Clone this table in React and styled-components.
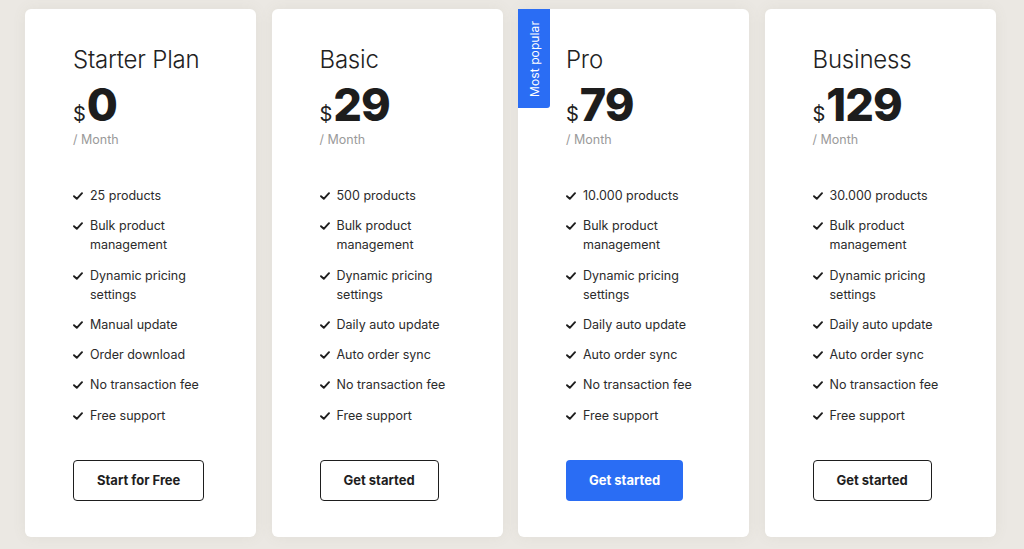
import styled, { createGlobalStyle } from "styled-components";

const plans = [
    {
        name: "Starter Plan",
        price: "0",
        cta: "Start for Free",
        features: [
            "25 products",
            "Bulk product management",
            "Dynamic pricing settings",
            "Manual update",
            "Order download",
            "No transaction fee",
            "Free support",
        ],
    },
    {
        name: "Basic",
        price: "29",
        cta: "Get started",
        features: [
            "500 products",
            "Bulk product management",
            "Dynamic pricing settings",
            "Daily auto update",
            "Auto order sync",
            "No transaction fee",
            "Free support",
        ],
    },
    {
        name: "Pro",
        price: "79",
        cta: "Get started",
        popular: true,
        features: [
            "10.000 products",
            "Bulk product management",
            "Dynamic pricing settings",
            "Daily auto update",
            "Auto order sync",
            "No transaction fee",
            "Free support",
        ],
    },
    {
        name: "Business",
        price: "129",
        cta: "Get started",
        features: [
            "30.000 products",
            "Bulk product management",
            "Dynamic pricing settings",
            "Daily auto update",
            "Auto order sync",
            "No transaction fee",
            "Free support",
        ],
    },
];

const GlobalStyle = createGlobalStyle`
    body {
        margin: 0;
        background: #ebe8e3;
        font-family: "Inter", "Liberation Sans", sans-serif;
        color: #222;
    }
`;

function Check() {
    return (
        <svg width="10" height="8" viewBox="0 0 10 8" fill="none">
            <path
                d="M1 4.2 L3.8 6.8 L9 1.2"
                stroke="#1e1e1e"
                strokeWidth="1.9"
                strokeLinecap="round"
                strokeLinejoin="round"
            />
        </svg>
    );
}

function PlanCard({ plan }) {
    return (
        <Card>
            {plan.popular && <Badge>Most popular</Badge>}
            <Title>{plan.name}</Title>
            <PriceRow>
                <Currency>$</Currency>
                <Amount>{plan.price}</Amount>
            </PriceRow>
            <Period>/ Month</Period>
            <Features>
                {plan.features.map((f) => (
                    <Feature key={f}>
                        <CheckWrap>
                            <Check />
                        </CheckWrap>
                        <span>{f}</span>
                    </Feature>
                ))}
            </Features>
            <Button primary={plan.popular}>{plan.cta}</Button>
        </Card>
    );
}

export default function App() {
    return (
        <>
            <GlobalStyle />
            <Page>
                {plans.map((p) => (
                    <PlanCard key={p.name} plan={p} />
                ))}
            </Page>
        </>
    );
}

const Page = styled.div`
    display: grid;
    grid-template-columns: repeat(4, 231px);
    column-gap: 15.5px;
    padding: 9px 25px 12px;
    height: 549px;
    box-sizing: border-box;
`;

const Card = styled.div`
    position: relative;
    background: #fff;
    border-radius: 6px;
    box-shadow: 0 0 14px rgba(120, 110, 90, 0.08);
    padding: 36px 20px 0 48px;
    display: flex;
    flex-direction: column;
    align-items: flex-start;
`;

const Badge = styled.div`
    position: absolute;
    left: 0;
    top: 0;
    width: 32px;
    height: 99px;
    background: #2a6df4;
    color: #fff;
    font-size: 12px;
    writing-mode: vertical-rl;
    transform: rotate(180deg);
    border-radius: 3px 0 0 0;
    display: flex;
    align-items: center;
    justify-content: center;
    letter-spacing: 0.1px;
`;

const Title = styled.h2`
    margin: 0;
    font-size: 24px;
    font-weight: 300;
    line-height: 30px;
    color: #222;
    letter-spacing: -0.2px;
`;

const PriceRow = styled.div`
    display: flex;
    align-items: baseline;
    margin-top: 6px;
    height: 48px;
`;

const Currency = styled.span`
    font-size: 20px;
    font-weight: 400;
    margin-right: 1px;
`;

const Amount = styled.span`
    font-size: 45px;
    font-weight: 800;
    line-height: 48px;
    letter-spacing: -1px;
    color: #1d1d1d;
`;

const Period = styled.div`
    margin-top: 3px;
    font-size: 12.5px;
    color: #9a9a9a;
`;

const Features = styled.ul`
    list-style: none;
    margin: 39px 0 0;
    padding: 0;
    display: flex;
    flex-direction: column;
    gap: 11.3px;
`;

const Feature = styled.li`
    display: flex;
    align-items: flex-start;
    font-size: 12.5px;
    line-height: 19px;
    color: #2b2b2b;
    max-width: 140px;
`;

const CheckWrap = styled.span`
    flex: none;
    width: 17px;
    display: flex;
    padding-top: 6px;
`;

const Button = styled.button`
    margin-top: 35px;
    height: 41px;
    padding: 0 23px;
    border-radius: 4px;
    border: ${({ primary }) => (primary ? "none" : "1.5px solid #1e1e1e")};
    background: ${({ primary }) => (primary ? "#2a6df4" : "#fff")};
    color: ${({ primary }) => (primary ? "#fff" : "#1e1e1e")};
    font-family: "Inter", "Liberation Sans", sans-serif;
    font-size: 13px;
    font-weight: 700;
    cursor: pointer;
`;
